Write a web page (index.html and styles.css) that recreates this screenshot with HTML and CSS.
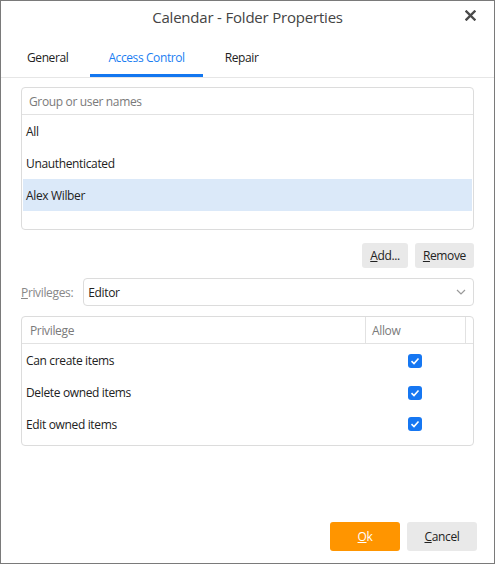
FILE: index.html
```html
<!DOCTYPE html>
<html>
<head>
<meta charset="utf-8">
<link rel="stylesheet" href="styles.css">
</head>
<body>
<div class="dialog">
  <div class="titlebar">
    <span class="title">Calendar - Folder Properties</span>
    <span class="close"><svg width="11" height="11" viewBox="0 0 11 11"><path d="M1.5 1.5L9.5 9.5M9.5 1.5L1.5 9.5" stroke="#4a4a4a" stroke-width="2.4" stroke-linecap="square"/></svg></span>
  </div>
  <div class="tabs">
    <div class="tab">General</div>
    <div class="tab active">Access Control</div>
    <div class="tab">Repair</div>
  </div>
  <div class="content">
    <div class="box users">
      <div class="box-head"><span class="head-cell">Group or user names</span></div>
      <div class="list">
        <div class="row">All</div>
        <div class="row">Unauthenticated</div>
        <div class="row selected">Alex Wilber</div>
      </div>
    </div>
    <div class="actions">
      <button class="btn"><u>A</u>dd...</button>
      <button class="btn"><u>R</u>emove</button>
    </div>
    <div class="priv-row">
      <span class="label"><u>P</u>rivileges:</span>
      <div class="select">
        <span>Editor</span>
        <svg width="10" height="6" viewBox="0 0 10 6"><path d="M1 1L5 5L9 1" fill="none" stroke="#9a9a9a" stroke-width="1.2"/></svg>
      </div>
    </div>
    <div class="box privs">
      <div class="box-head grid">
        <span class="head-cell">Privilege</span>
        <span class="head-cell allow">Allow</span>
        <span class="head-cell last"></span>
      </div>
      <div class="plist">
        <div class="prow grid"><span class="pname">Can create items</span><span class="pcheck"><span class="check"><svg width="10" height="8" viewBox="0 0 10 8"><path d="M1.5 4.2L4 6.5L8.5 1.5" fill="none" stroke="#fff" stroke-width="1.6"/></svg></span></span><span></span></div>
        <div class="prow grid"><span class="pname">Delete owned items</span><span class="pcheck"><span class="check"><svg width="10" height="8" viewBox="0 0 10 8"><path d="M1.5 4.2L4 6.5L8.5 1.5" fill="none" stroke="#fff" stroke-width="1.6"/></svg></span></span><span></span></div>
        <div class="prow grid"><span class="pname">Edit owned items</span><span class="pcheck"><span class="check"><svg width="10" height="8" viewBox="0 0 10 8"><path d="M1.5 4.2L4 6.5L8.5 1.5" fill="none" stroke="#fff" stroke-width="1.6"/></svg></span></span><span></span></div>
      </div>
    </div>
  </div>
  <div class="footer">
    <button class="btn big primary"><u>O</u>k</button>
    <button class="btn big"><u>C</u>ancel</button>
  </div>
</div>
</body>
</html>
```

FILE: styles.css
```css
html, body {
  margin: 0;
  padding: 0;
  height: 100%;
}
body {
  font-family: "Open Sans", "Noto Sans", sans-serif;
  font-size: 12px;
  color: #222;
  background: #fff;
}
.dialog {
  box-sizing: border-box;
  height: 564px;
  width: 495px;
  border: 1px solid #7a7a7a;
  display: flex;
  flex-direction: column;
}
.titlebar {
  height: 32px;
  display: flex;
  align-items: center;
  justify-content: center;
  position: relative;
}
.title {
  font-size: 15px;
  color: #444;
  letter-spacing: -0.2px;
}
.close {
  position: absolute;
  right: 18px;
  top: 9px;
  width: 11px;
  height: 11px;
  display: flex;
}
.tabs {
  display: flex;
  gap: 4px;
  padding-left: 8px;
  height: 44px;
  border-bottom: 1px solid #e6e6e6;
}
.tab {
  padding: 7px 18px 0;
  display: flex;
  align-items: center;
  box-sizing: border-box;
  border-bottom: 3px solid transparent;
  letter-spacing: -0.4px;
}
.tab.active {
  color: #1b7ef2;
  border-bottom-color: #1377f0;
}
.content {
  padding: 9px 20px 0 20px;
  display: flex;
  flex-direction: column;
}
.box {
  border: 1px solid #dcdcdc;
  border-radius: 4px;
  overflow: hidden;
}
.box-head {
  height: 26px;
  border-bottom: 1px solid #e2e2e2;
  display: flex;
  align-items: center;
}
.head-cell {
  color: #7a7a7a;
  padding-left: 7px;
  letter-spacing: -0.35px;
}
.list {
  height: 114px;
}
.row {
  height: 32px;
  display: flex;
  align-items: center;
  padding-left: 4px;
  letter-spacing: -0.35px;
}
.row.selected {
  background: #dbe9f9;
  margin: 0 1px;
  padding-left: 3px;
}
.actions {
  display: flex;
  justify-content: flex-end;
  gap: 7px;
  margin-top: 13px;
}
.btn {
  font-family: inherit;
  font-size: 12px;
  color: #222;
  background: #e9e9e9;
  border: none;
  border-radius: 3px;
  height: 25px;
  padding: 0 8px;
  letter-spacing: -0.35px;
}
.priv-row {
  display: flex;
  align-items: center;
  margin-top: 10px;
  gap: 10px;
}
.label {
  color: #888;
  letter-spacing: -0.35px;
}
.label u {
  text-decoration-color: #888;
}
.select {
  flex: 1;
  height: 26px;
  border: 1px solid #dcdcdc;
  border-radius: 4px;
  display: flex;
  align-items: center;
  justify-content: space-between;
  padding: 0 7px 0 4px;
  letter-spacing: -0.35px;
}
.privs {
  margin-top: 10px;
}
.grid {
  display: grid;
  grid-template-columns: 343px 100px 1fr;
}
.box-head.grid .head-cell {
  height: 100%;
  display: flex;
  align-items: center;
  padding-left: 8px;
}
.box-head.grid .allow {
  border-left: 1px solid #e2e2e2;
  padding-left: 6px;
}
.box-head.grid .last {
  border-left: 1px solid #e2e2e2;
  padding-left: 0;
}
.plist {
  padding-top: 1px;
  height: 100px;
}
.prow {
  height: 31.7px;
  align-items: center;
}
.pname {
  padding-left: 4px;
  letter-spacing: -0.35px;
}
.pcheck {
  display: flex;
  justify-content: center;
}
.check {
  width: 14px;
  height: 14px;
  border-radius: 3px;
  background: #1677f2;
  display: flex;
  align-items: center;
  justify-content: center;
}
.footer {
  margin-top: auto;
  display: flex;
  justify-content: flex-end;
  gap: 7px;
  padding: 0 17px 12px 0;
}
.btn.big {
  width: 70px;
  height: 29px;
}
.btn.primary {
  background: #ff9500;
  color: #fff;
}
```
